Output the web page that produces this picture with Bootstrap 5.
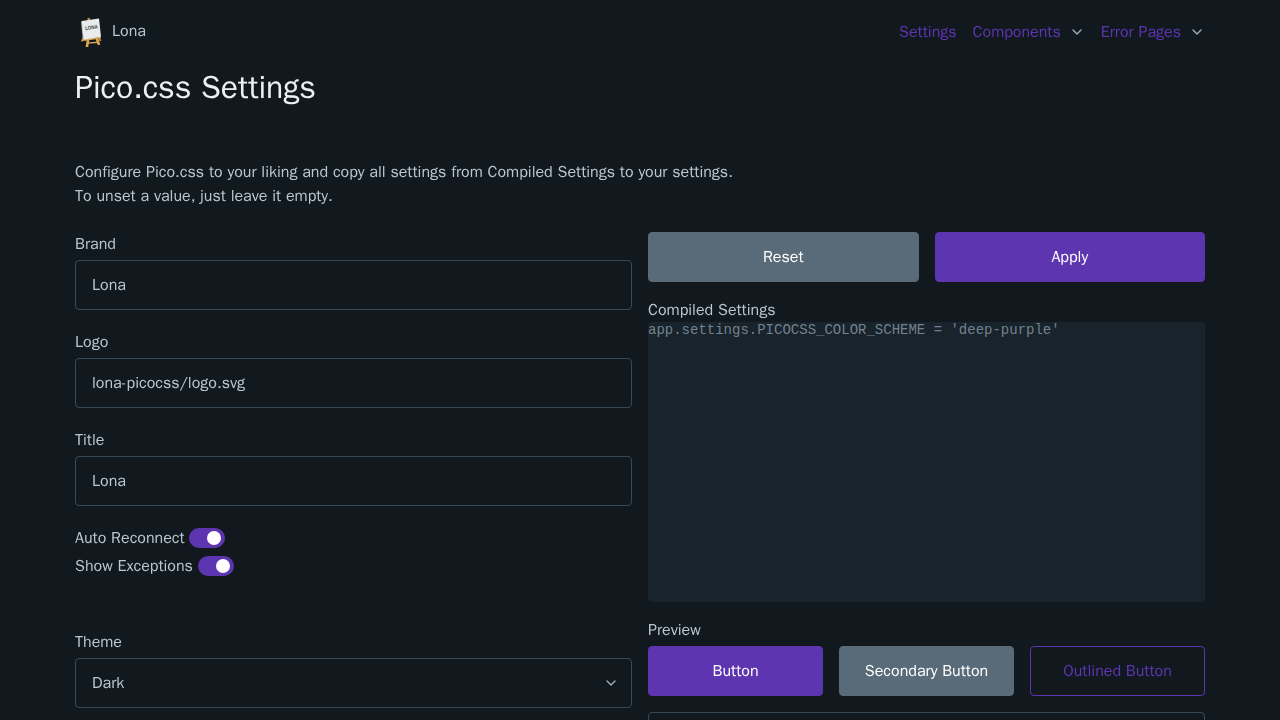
<!DOCTYPE html>
<html lang="en" data-bs-theme="dark">
<head>
<meta charset="utf-8">
<meta name="viewport" content="width=device-width, initial-scale=1">
<title>Lona</title>
<link href="https://cdn.jsdelivr.net/npm/bootstrap@5.3.0/dist/css/bootstrap.min.css" rel="stylesheet">
<style>
:root { --page: #11191f; --text: #bbc6ce; --line: #374956; --accent: #5e35b1; --muted: #596b78; }
html, body { height: 100%; }
body { background: var(--page); color: var(--text); font-family: "WenQuanYi Zen Hei", "Liberation Sans", sans-serif; font-size: 16px; line-height: 24px; overflow: hidden; }
.page-wrap { width: 1130px; height: 720px; overflow: hidden; }
.form-row { --bs-gutter-x: 16px; }
.top-bar { height: 62px; }
.brand-name { color: var(--text); }
.top-bar .nav { padding-top: 2px; }
.top-bar .nav-link { color: var(--accent); padding: 0; }
.chev { width: 16px; height: 16px; fill: none; stroke: #a2afb9; stroke-width: 2; stroke-linecap: round; stroke-linejoin: round; }
.page-title { font-size: 32px; line-height: 36px; font-weight: 400; color: #edf0f3; margin: 8px 0 54px; }
.form-control, .form-select { height: 50px; padding: 12px 16px; background-color: var(--page); border-color: var(--line); color: var(--text); border-radius: 4px; font-size: 16px; line-height: 24px; }
.form-select { background-image: none; }
.form-label { margin-bottom: 4px; display: block; }
.field { margin-bottom: 20px; }
.theme-field { margin-top: 48px; }
.btn { height: 50px; border-radius: 4px; font-size: 16px; line-height: 24px; padding: 12px 0; }
.btn-accent, .btn-accent:hover { background: var(--accent); border-color: var(--accent); color: #fff; }
.btn-muted, .btn-muted:hover { background: var(--muted); border-color: var(--muted); color: #fff; }
.btn-line { border-color: var(--accent); color: var(--accent); }
.code-box { height: 280px; background: #18232c; color: #73828c; border-radius: 4px; font: 14px/16px "Liberation Mono", monospace; }
.switch-row { height: 28px; }
.switch-row .form-check-input { width: 36px; height: 20px; margin: 2px 0 0 4px; padding: 0; background: var(--accent); border: 3px solid var(--accent); border-radius: 20px; display: flex; justify-content: flex-end; }
.switch-row #exc { margin-left: 5px; }
.switch-row .form-check-input::before { content: ""; width: 14px; height: 14px; margin-right: 1px; border-radius: 50%; background: #fff; }
.select-chev { right: 13px; top: 17px; }
</style>
</head>
<body>
<div class="page-wrap mx-auto">
<nav class="top-bar d-flex align-items-center justify-content-between">
  <a href="#" class="d-flex align-items-center text-decoration-none">
    <svg width="33" height="32" viewBox="0 0 33 32" aria-hidden="true">
      <path d="M12.3 3.2l2.3-.5.8 2.6h-2.8zM8.2 21l1.6.5-2.1 5.2-1.8-.5zM24.6 22.5l1.8 3-1.7 1-1.2-3z" fill="#c98f3c"/>
      <path d="M11.8 24.5h2.6l-1.2 7.4h-2.6zM20.6 24l2.6-.4 2.1 6-2.5.7z" fill="#e0a851"/>
      <path d="M8 24.2L25.6 21.8l.3 1.8L8.2 26zM12.2 27.5l10.8-1v1.4l-11 .9z" fill="#e0a851"/>
      <path d="M6 7l1.3-1.3 2 18.4-1.6-.6z" fill="#aeb5b9"/>
      <path d="M6.8 6.1L24 3.4l2 18.4-17.3 2.9z" fill="#e9ebec"/>
      <text x="10.4" y="15.2" font-family="Liberation Sans, sans-serif" font-size="5.4" font-weight="700" fill="#3a3f43" textLength="12.8" lengthAdjust="spacingAndGlyphs" transform="rotate(-8 10.4 15.2)">LONA</text>
    </svg>
    <span class="brand-name ms-1">Lona</span>
  </a>
  <div class="nav gap-3">
    <a class="nav-link" href="#">Settings</a>
    <a class="nav-link d-flex align-items-center gap-2" href="#">Components <svg class="chev" viewBox="0 0 24 24"><path d="M6 9l6 6 6-6"/></svg></a>
    <a class="nav-link d-flex align-items-center gap-2" href="#">Error Pages <svg class="chev" viewBox="0 0 24 24"><path d="M6 9l6 6 6-6"/></svg></a>
  </div>
</nav>
<h1 class="page-title">Pico.css Settings</h1>
<p class="mb-4">Configure Pico.css to your liking and copy all settings from Compiled Settings to your settings.<br>To unset a value, just leave it empty.</p>
<div class="d-flex gap-3">
  <div class="flex-fill w-50">
    <div class="field"><label class="form-label" for="brand">Brand</label><input id="brand" class="form-control" value="Lona"></div>
    <div class="field"><label class="form-label" for="logo">Logo</label><input id="logo" class="form-control" value="lona-picocss/logo.svg"></div>
    <div class="field"><label class="form-label" for="ttl">Title</label><input id="ttl" class="form-control" value="Lona"></div>
    <div class="switch-row d-flex"><label for="rec">Auto Reconnect</label><input id="rec" class="form-check-input" type="checkbox" role="switch" checked></div>
    <div class="switch-row d-flex"><label for="exc">Show Exceptions</label><input id="exc" class="form-check-input" type="checkbox" role="switch" checked></div>
    <div class="theme-field">
      <label class="form-label" for="theme">Theme</label>
      <div class="position-relative">
        <select id="theme" class="form-select"><option>Dark</option></select>
        <svg class="chev select-chev position-absolute" viewBox="0 0 24 24"><path d="M6 9l6 6 6-6"/></svg>
      </div>
    </div>
  </div>
  <div class="flex-fill w-50">
    <div class="row form-row mb-3">
      <div class="col"><button class="btn btn-muted w-100">Reset</button></div>
      <div class="col"><button class="btn btn-accent w-100">Apply</button></div>
    </div>
    <div>Compiled Settings</div>
    <pre class="code-box mb-3">app.settings.PICOCSS_COLOR_SCHEME = 'deep-purple'</pre>
    <div class="form-label">Preview</div>
    <div class="row form-row mb-3">
      <div class="col"><button class="btn btn-accent w-100">Button</button></div>
      <div class="col"><button class="btn btn-muted w-100">Secondary Button</button></div>
      <div class="col"><button class="btn btn-line w-100">Outlined Button</button></div>
    </div>
    <input class="form-control" aria-label="Preview input">
  </div>
</div>
</div>
<script src="https://cdn.jsdelivr.net/npm/bootstrap@5.3.0/dist/js/bootstrap.bundle.min.js"></script>
</body>
</html>
